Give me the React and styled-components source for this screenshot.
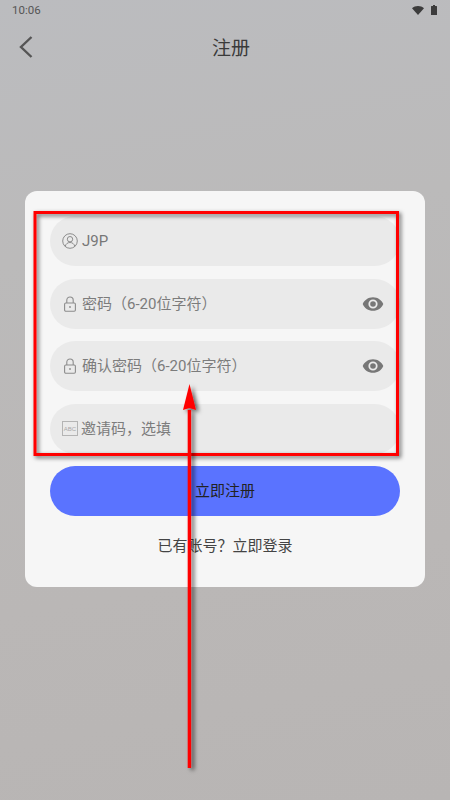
import React from 'react';
import styled, { createGlobalStyle } from 'styled-components';

const GlobalStyle = createGlobalStyle`
  html, body {
    margin: 0;
    padding: 0;
  }
  body {
    font-family: Roboto, "Noto Sans CJK SC", sans-serif;
  }
`;

const Page = styled.div`
  position: relative;
  width: 450px;
  height: 800px;
  overflow: hidden;
  display: flex;
  flex-direction: column;
  background: linear-gradient(170deg, #bbbcbf 0%, #bbbaba 30%, #bab7b6 70%, #b8b5b4 100%);
`;

const StatusBar = styled.div`
  height: 20px;
  padding: 0 13px 0 12px;
  display: flex;
  align-items: center;
  justify-content: space-between;
  font-size: 11.5px;
  color: #555;
`;

const StatusIcons = styled.div`
  display: flex;
  align-items: center;
  gap: 7px;
`;

const NavBar = styled.div`
  position: relative;
  height: 56px;
  box-sizing: border-box;
  padding: 0 0 4px 12px;
  display: flex;
  align-items: center;
  justify-content: center;
  font-size: 19px;
  color: #3a3a3a;
`;

const BackButton = styled.svg`
  position: absolute;
  left: 18px;
  top: 15px;
`;

const Card = styled.div`
  margin: 115px 25px 0;
  padding: 25px;
  height: 396px;
  box-sizing: border-box;
  background: #f6f6f6;
  border-radius: 12px;
  display: flex;
  flex-direction: column;
  gap: 12.5px;
`;

const Field = styled.label`
  height: 50px;
  flex-shrink: 0;
  padding: 0 16px 0 12px;
  background: #eaeaea;
  border-radius: 25px;
  display: flex;
  align-items: center;
  gap: 4px;
`;

const Input = styled.input`
  flex: 1;
  min-width: 0;
  border: 0;
  outline: 0;
  padding: 0;
  background: transparent;
  font-family: Roboto, "Noto Sans CJK SC", sans-serif;
  font-size: 15px;
  color: #777;
  &::placeholder {
    color: #7c7c7c;
    opacity: 1;
  }
`;

const AbcIcon = styled.span`
  width: 16px;
  height: 15px;
  margin-right: -1px;
  box-sizing: border-box;
  border: 1px solid #b4b4b4;
  display: flex;
  align-items: center;
  justify-content: center;
  font-family: "Liberation Sans", sans-serif;
  font-size: 6px;
  color: #a8a8a8;
  flex-shrink: 0;
`;

const SubmitButton = styled.button`
  height: 50px;
  flex-shrink: 0;
  border: 0;
  padding: 0 0 3px;
  border-radius: 25px;
  background: #5a73ff;
  font-family: Roboto, "Noto Sans CJK SC", sans-serif;
  font-size: 15px;
  color: #222;
`;

const LoginLink = styled.div`
  margin-top: 6px;
  text-align: center;
  font-size: 15px;
  line-height: 22px;
  color: #444;
`;

const Annotation = styled.svg`
  position: absolute;
  left: 0;
  top: 0;
  pointer-events: none;
`;

const UserIcon = () => (
  <svg width="16" height="16" viewBox="0 0 16 16" fill="none" stroke="#8c8c8c" strokeWidth="1">
    <circle cx="8" cy="8" r="7.3" />
    <circle cx="8" cy="6.2" r="2.7" />
    <path d="M3.2 13.4c.6-2.6 2.5-3.9 4.8-3.9s4.2 1.3 4.8 3.9" />
  </svg>
);

const LockIcon = () => (
  <svg width="16" height="16" viewBox="0 0 16 16" fill="none" stroke="#8c8c8c" strokeWidth="1.1">
    <rect x="2.6" y="7" width="10.8" height="8.2" rx="1.2" />
    <path d="M4.8 7V4.2a3.2 3.2 0 0 1 6.4 0V7" />
    <circle cx="8" cy="11" r="0.9" fill="#8c8c8c" stroke="none" />
  </svg>
);

const EyeIcon = () => (
  <svg width="22" height="16" viewBox="0 0 22 16" fill="#777">
    <path fillRule="evenodd" d="M11 1.2C6.2 1.2 2.4 4 .7 8c1.7 4 5.5 6.8 10.3 6.8S19.600 12 21.300 8C19.600 4 15.800 1.200 11 1.200zm0 11.400a4.600 4.600 0 1 1 0-9.200 4.600 4.600 0 0 1 0 9.200z" />
    <circle cx="11" cy="8" r="2.800" />
  </svg>
);

function App() {
  return (
    <Page>
      <GlobalStyle />
      <StatusBar>
        <span>10:06</span>
        <StatusIcons>
          <svg width="12" height="9" viewBox="0 0 12 9" fill="#3c3c3c">
            <path d="M0 2.200C1.600.800 3.700 0 6 0s4.400.800 6 2.200L6 9z" />
          </svg>
          <svg width="6" height="10" viewBox="0 0 6 10" fill="#3c3c3c">
            <path d="M2 0h2v1h1.500a.5.5 0 0 1 .5.500V10H0V1.500A.5.5 0 0 1 .5 1H2z" />
          </svg>
        </StatusIcons>
      </StatusBar>
      <NavBar>
        注册
        <BackButton width="16" height="24" viewBox="0 0 16 24" fill="none" stroke="#555" strokeWidth="2.400">
          <path d="M13.500 2 3 12l10.500 10" />
        </BackButton>
      </NavBar>
      <Card>
        <Field>
          <UserIcon />
          <Input readOnly value="J9P" />
        </Field>
        <Field>
          <LockIcon />
          <Input readOnly placeholder="密码（6-20位字符）" />
          <EyeIcon />
        </Field>
        <Field>
          <LockIcon />
          <Input readOnly placeholder="确认密码（6-20位字符）" />
          <EyeIcon />
        </Field>
        <Field>
          <AbcIcon>ABC</AbcIcon>
          <Input readOnly placeholder="邀请码，选填" />
        </Field>
        <SubmitButton>立即注册</SubmitButton>
        <LoginLink>已有账号？立即登录</LoginLink>
      </Card>
      <Annotation width="450" height="800" viewBox="0 0 450 800">
        <defs>
          <filter id="markShadow" x="-20%" y="-20%" width="140%" height="140%">
            <feDropShadow dx="2" dy="2" stdDeviation="2" floodColor="#000" floodOpacity="0.6" />
          </filter>
          <filter id="arrowShadow" filterUnits="userSpaceOnUse" x="170" y="370" width="40" height="410">
            <feDropShadow dx="3" dy="2" stdDeviation="2" floodColor="#000" floodOpacity="0.6" />
          </filter>
        </defs>
        <rect x="35" y="212.500" width="362.500" height="242" fill="none" stroke="#f00" strokeWidth="3" filter="url(#markShadow)" />
        <g filter="url(#arrowShadow)">
          <path d="M189.400 768V410" stroke="#f00" strokeWidth="3.400" />
          <path d="M189.500 384 196 410 189.500 408 183 410z" fill="#f00" />
        </g>
      </Annotation>
    </Page>
  );
}

export default App;
